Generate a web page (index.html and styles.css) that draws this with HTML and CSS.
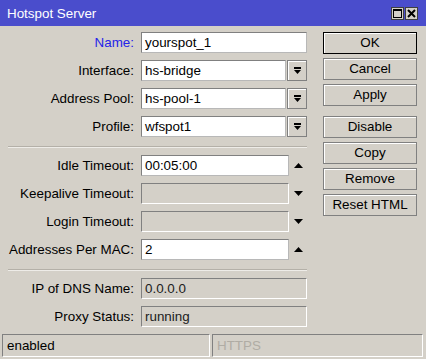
FILE: index.html
```html
<!DOCTYPE html>
<html lang="en">
<head>
  <meta charset="UTF-8">
  <title>Hotspot Server</title>
  <link rel="stylesheet" href="styles.css">
</head>
<body>
<div class="window">
  <!-- Title bar -->
  <div class="titlebar">
    <span class="title">Hotspot Server</span>
    <div class="title-buttons">
      <span class="tbtn">
        <svg width="9" height="9" viewBox="0 0 9 9"><rect x="0.5" y="0.5" width="8" height="8" fill="none" stroke="#000"/><rect x="0" y="0" width="9" height="2" fill="#000"/></svg>
      </span>
      <span class="tbtn">
        <svg width="9" height="9" viewBox="0 0 9 9"><path d="M1 1 L8 8 M8 1 L1 8" stroke="#000" stroke-width="2"/></svg>
      </span>
    </div>
  </div>

  <div class="content">
    <div class="form">
      <div class="group">
        <div class="row">
          <span class="label label-active">Name:</span>
          <div class="field">yourspot_1</div>
        </div>
        <div class="row">
          <span class="label">Interface:</span>
          <div class="field field-drop">hs-bridge</div>
          <div class="drop"><svg width="7" height="7" viewBox="0 0 7 7"><rect x="0" y="0" width="7" height="2" fill="#000"/><polygon points="0,3 7,3 3.5,7" fill="#000"/></svg></div>
        </div>
        <div class="row">
          <span class="label">Address Pool:</span>
          <div class="field field-drop">hs-pool-1</div>
          <div class="drop"><svg width="7" height="7" viewBox="0 0 7 7"><rect x="0" y="0" width="7" height="2" fill="#000"/><polygon points="0,3 7,3 3.5,7" fill="#000"/></svg></div>
        </div>
        <div class="row">
          <span class="label">Profile:</span>
          <div class="field field-drop">wfspot1</div>
          <div class="drop"><svg width="7" height="7" viewBox="0 0 7 7"><rect x="0" y="0" width="7" height="2" fill="#000"/><polygon points="0,3 7,3 3.5,7" fill="#000"/></svg></div>
        </div>
      </div>

      <div class="separator"></div>

      <div class="group">
        <div class="row">
          <span class="label">Idle Timeout:</span>
          <div class="field field-spin">00:05:00</div>
          <div class="spin"><svg width="9" height="5" viewBox="0 0 9 5"><polygon points="0,5 4.5,0 9,5" fill="#000"/></svg></div>
        </div>
        <div class="row">
          <span class="label">Keepalive Timeout:</span>
          <div class="field field-spin field-off"></div>
          <div class="spin"><svg width="9" height="5" viewBox="0 0 9 5"><polygon points="0,0 9,0 4.5,5" fill="#000"/></svg></div>
        </div>
        <div class="row">
          <span class="label">Login Timeout:</span>
          <div class="field field-spin field-off"></div>
          <div class="spin"><svg width="9" height="5" viewBox="0 0 9 5"><polygon points="0,0 9,0 4.5,5" fill="#000"/></svg></div>
        </div>
        <div class="row">
          <span class="label">Addresses Per MAC:</span>
          <div class="field field-spin">2</div>
          <div class="spin"><svg width="9" height="5" viewBox="0 0 9 5"><polygon points="0,5 4.5,0 9,5" fill="#000"/></svg></div>
        </div>
      </div>

      <div class="separator"></div>

      <div class="group">
        <div class="row">
          <span class="label">IP of DNS Name:</span>
          <div class="field field-off">0.0.0.0</div>
        </div>
        <div class="row">
          <span class="label">Proxy Status:</span>
          <div class="field field-off">running</div>
        </div>
      </div>
    </div>

    <!-- Action buttons -->
    <div class="buttons">
      <div class="btn btn-default">OK</div>
      <div class="btn">Cancel</div>
      <div class="btn">Apply</div>
      <div class="btn btn-spaced">Disable</div>
      <div class="btn">Copy</div>
      <div class="btn">Remove</div>
      <div class="btn">Reset HTML</div>
    </div>
  </div>

  <div class="statusbar">
    <div class="cell cell-main">enabled</div>
    <div class="cell cell-dim">HTTPS</div>
  </div>
</div>
</body>
</html>
```

FILE: styles.css
```css
/* Global */
body {
  margin: 0;
  font-family: "Liberation Sans", Arial, sans-serif;
  font-size: 13.4px;
  color: #000;
  background: #d4d0c8;
}

.window {
  width: 426px;
  height: 359px;
  display: flex;
  flex-direction: column;
  background: #d4d0c8;
}

/* Title bar */
.titlebar {
  height: 26px;
  flex-shrink: 0;
  display: flex;
  align-items: center;
  justify-content: space-between;
  padding: 0 8px 0 7px;
  background: #4a4dcc;
  color: #fff;
}

.title-buttons {
  display: flex;
  gap: 1px;
  margin-top: 1px;
}

.tbtn {
  width: 13px;
  height: 13px;
  box-sizing: border-box;
  display: flex;
  align-items: center;
  justify-content: center;
  background: #d4d0c8;
  border: 1px solid #404040;
}

/* Form */
.content {
  display: flex;
  padding-top: 6px;
}

.form {
  width: 307px;
}

.group {
  display: flex;
  flex-direction: column;
  gap: 7px;
}

.row {
  display: flex;
  align-items: center;
  height: 21px;
}

.label {
  width: 134px;
  margin-right: 7px;
  flex-shrink: 0;
  text-align: right;
  white-space: nowrap;
}

.label-active {
  color: #2424e8;
}

.field {
  width: 166px;
  height: 21px;
  box-sizing: border-box;
  padding: 0 3px;
  line-height: 19px;
  background: #fff;
  border: 1px solid #808080;
  border-right-color: #b8b8b8;
  border-bottom-color: #b8b8b8;
  white-space: nowrap;
}

.field-drop {
  width: 145px;
}

.field-spin {
  width: 148px;
}

.field-off {
  background: #d4d0c8;
  color: #202020;
  border-color: #808080 #fff #fff #808080;
}

.drop {
  width: 20px;
  height: 21px;
  margin-left: 1px;
  box-sizing: border-box;
  display: flex;
  align-items: center;
  justify-content: center;
  border: 1px solid #808080;
  box-shadow: inset 1px 1px #fff;
}

.spin {
  width: 18px;
  display: flex;
  justify-content: center;
}

.separator {
  margin: 9px 0 7px 8px;
  border-top: 1px solid #b4b0a8;
  border-bottom: 1px solid #eeece8;
}

/* Buttons */
.buttons {
  width: 94px;
  margin-left: 16px;
  display: flex;
  flex-direction: column;
  gap: 4px;
}

.btn {
  height: 22px;
  box-sizing: border-box;
  line-height: 20px;
  text-align: center;
  border: 1px solid #808080;
  box-shadow: inset 1px 1px #fff;
}

.btn-default {
  border-color: #000;
}

.btn-spaced {
  margin-top: 6px;
}

/* Status bar */
.statusbar {
  display: flex;
  gap: 2px;
  margin-top: 7px;
  padding: 0 3px 0 2px;
}

.cell {
  height: 23px;
  box-sizing: border-box;
  padding-left: 4px;
  line-height: 21px;
  border: 1px solid #808080;
  border-right-color: #fff;
  border-bottom-color: #fff;
}

.cell-main {
  width: 208px;
}

.cell-dim {
  flex: 1;
  color: #b0aca4;
}
```
